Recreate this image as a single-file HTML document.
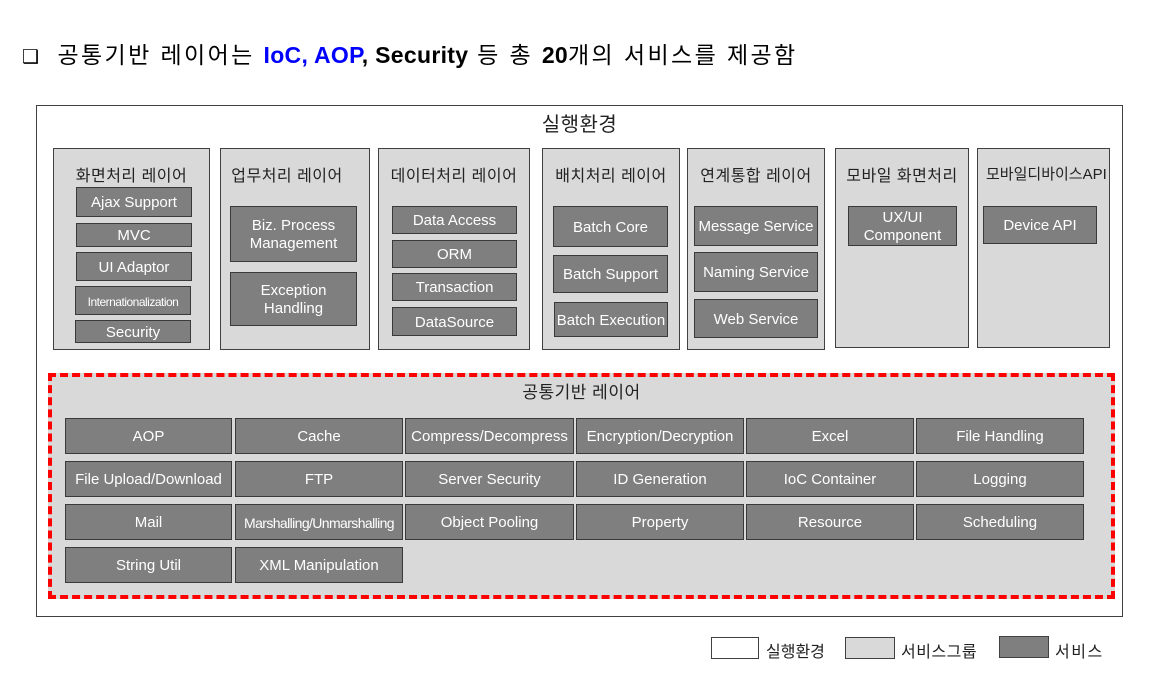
<!DOCTYPE html><html><head><meta charset="utf-8"><style>
body{margin:0;width:1155px;height:697px;background:#fff;position:relative;font-family:"Liberation Sans","Noto Sans CJK KR",sans-serif;overflow:hidden}
.a{position:absolute;box-sizing:border-box}
.g{background:#d9d9d9;border:1px solid #404040}
.s{background:#7f7f7f;border:1px solid #3a3a3a;color:#fff;font-size:15px;display:flex;align-items:center;justify-content:center;text-align:center;line-height:18px;white-space:nowrap;padding-top:2px}
.l{font-size:16px;color:#222;text-align:center;white-space:nowrap;letter-spacing:0.5px}
</style></head><body>
<div class="a" style="left:22px;top:36px;font-size:23px;color:#000;white-space:nowrap;letter-spacing:2.4px"><span style="font-size:19px;margin-right:16px">❑</span>공통기반 레이어는 <b style="color:#0000ff;letter-spacing:0.3px">IoC, AOP</b><b style="letter-spacing:0.3px">, Security</b> 등 총 <b style="letter-spacing:0.3px">20</b>개의 서비스를 제공함</div>
<div class="a" style="left:36px;top:105px;width:1087px;height:512px;border:1px solid #404040"></div>
<div class="a l" style="left:36px;top:108px;width:1087px;font-size:20px">실행환경</div>

<div class="a g" style="left:53px;top:148px;width:157px;height:202px"></div>
<div class="a l" style="left:53px;top:162px;width:157px">화면처리 레이어</div>
<div class="a s" style="left:76px;top:187px;width:116px;height:30px">Ajax Support</div>
<div class="a s" style="left:76px;top:223px;width:116px;height:24px">MVC</div>
<div class="a s" style="left:76px;top:252px;width:116px;height:29px">UI Adaptor</div>
<div class="a s" style="left:75px;top:286px;width:116px;height:29px;font-size:12px;letter-spacing:-0.5px">Internationalization</div>
<div class="a s" style="left:75px;top:320px;width:116px;height:23px">Security</div>

<div class="a g" style="left:220px;top:148px;width:150px;height:202px"></div>
<div class="a l" style="left:220px;top:162px;width:134px">업무처리 레이어</div>
<div class="a s" style="left:230px;top:206px;width:127px;height:56px">Biz. Process<br>Management</div>
<div class="a s" style="left:230px;top:272px;width:127px;height:54px">Exception<br>Handling</div>

<div class="a g" style="left:378px;top:148px;width:152px;height:202px"></div>
<div class="a l" style="left:378px;top:162px;width:152px">데이터처리 레이어</div>
<div class="a s" style="left:392px;top:206px;width:125px;height:28px">Data Access</div>
<div class="a s" style="left:392px;top:240px;width:125px;height:28px">ORM</div>
<div class="a s" style="left:392px;top:273px;width:125px;height:28px">Transaction</div>
<div class="a s" style="left:392px;top:307px;width:125px;height:29px">DataSource</div>

<div class="a g" style="left:542px;top:148px;width:138px;height:202px"></div>
<div class="a l" style="left:542px;top:162px;width:138px">배치처리 레이어</div>
<div class="a s" style="left:553px;top:206px;width:115px;height:41px">Batch Core</div>
<div class="a s" style="left:553px;top:255px;width:115px;height:38px">Batch Support</div>
<div class="a s" style="left:554px;top:302px;width:114px;height:35px">Batch Execution</div>

<div class="a g" style="left:687px;top:148px;width:138px;height:202px"></div>
<div class="a l" style="left:687px;top:162px;width:138px">연계통합 레이어</div>
<div class="a s" style="left:694px;top:206px;width:124px;height:40px">Message Service</div>
<div class="a s" style="left:694px;top:252px;width:124px;height:40px">Naming Service</div>
<div class="a s" style="left:694px;top:299px;width:124px;height:39px">Web Service</div>

<div class="a g" style="left:835px;top:148px;width:134px;height:200px"></div>
<div class="a l" style="left:835px;top:162px;width:134px">모바일 화면처리</div>
<div class="a s" style="left:848px;top:206px;width:109px;height:40px">UX/UI<br>Component</div>

<div class="a g" style="left:977px;top:148px;width:133px;height:200px;overflow:hidden"></div>
<div class="a l" style="left:986px;top:163px;font-size:15px;letter-spacing:0">모바일디바이스API</div>
<div class="a s" style="left:983px;top:206px;width:114px;height:38px">Device API</div>

<div class="a" style="left:48px;top:373px;width:1067px;height:226px;background:#d9d9d9;border:4px dashed #ff0000"></div>
<div class="a l" style="left:48px;top:378px;width:1067px;font-size:17px">공통기반 레이어</div>

<div class="a s" style="left:65px;top:418px;width:167px;height:36px">AOP</div>
<div class="a s" style="left:235px;top:418px;width:168px;height:36px">Cache</div>
<div class="a s" style="left:405px;top:418px;width:169px;height:36px">Compress/Decompress</div>
<div class="a s" style="left:576px;top:418px;width:168px;height:36px">Encryption/Decryption</div>
<div class="a s" style="left:746px;top:418px;width:168px;height:36px">Excel</div>
<div class="a s" style="left:916px;top:418px;width:168px;height:36px">File Handling</div>

<div class="a s" style="left:65px;top:461px;width:167px;height:36px">File Upload/Download</div>
<div class="a s" style="left:235px;top:461px;width:168px;height:36px">FTP</div>
<div class="a s" style="left:405px;top:461px;width:169px;height:36px">Server Security</div>
<div class="a s" style="left:576px;top:461px;width:168px;height:36px">ID Generation</div>
<div class="a s" style="left:746px;top:461px;width:168px;height:36px">IoC Container</div>
<div class="a s" style="left:916px;top:461px;width:168px;height:36px">Logging</div>

<div class="a s" style="left:65px;top:504px;width:167px;height:36px">Mail</div>
<div class="a s" style="left:235px;top:504px;width:168px;height:36px;font-size:14px;letter-spacing:-0.6px">Marshalling/Unmarshalling</div>
<div class="a s" style="left:405px;top:504px;width:169px;height:36px">Object Pooling</div>
<div class="a s" style="left:576px;top:504px;width:168px;height:36px">Property</div>
<div class="a s" style="left:746px;top:504px;width:168px;height:36px">Resource</div>
<div class="a s" style="left:916px;top:504px;width:168px;height:36px">Scheduling</div>

<div class="a s" style="left:65px;top:547px;width:167px;height:36px">String Util</div>
<div class="a s" style="left:235px;top:547px;width:168px;height:36px">XML Manipulation</div>

<div class="a" style="left:711px;top:637px;width:48px;height:22px;border:1px solid #404040;background:#fff"></div>
<div class="a l" style="left:766px;top:638px;letter-spacing:0">실행환경</div>
<div class="a g" style="left:845px;top:637px;width:50px;height:22px"></div>
<div class="a l" style="left:901px;top:638px;letter-spacing:0.5px">서비스그룹</div>
<div class="a" style="left:999px;top:636px;width:50px;height:22px;background:#7f7f7f;border:1px solid #404040"></div>
<div class="a l" style="left:1055px;top:638px;letter-spacing:1.5px">서비스</div>
</body></html>
